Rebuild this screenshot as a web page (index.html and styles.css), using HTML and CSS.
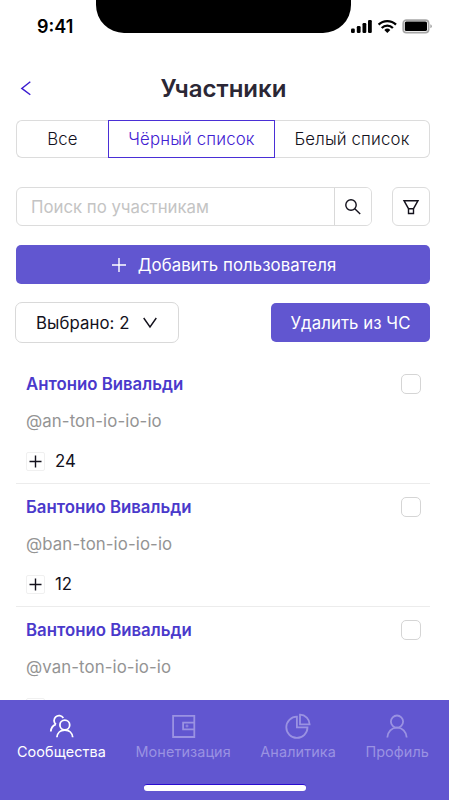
FILE: index.html
```html
<!DOCTYPE html>
<html lang="ru">
<head>
  <meta charset="UTF-8">
  <meta name="viewport" content="width=device-width, initial-scale=1">
  <title>Участники</title>
  <link rel="stylesheet" href="styles.css">
</head>
<body>
  <div class="screen">
    <!-- status bar -->
    <div class="status-bar">
      <span class="time">9:41</span>
      <div class="notch"></div>
      <svg class="status-icons" width="82" height="16" viewBox="0 0 82 16">
        <g fill="#000">
          <rect x="1" y="9.5" width="3.8" height="4.5" rx="1.2"/>
          <rect x="6.8" y="7" width="3.8" height="7" rx="1.2"/>
          <rect x="12.5" y="4" width="3.8" height="10" rx="1.2"/>
          <rect x="18" y="1" width="3.8" height="13" rx="1.2"/>
        </g>
        <g fill="none" stroke="#000" stroke-width="2.3">
          <path d="M28.6 5.6a12.4 12.4 0 0 1 17.4 0"/>
          <path d="M31.7 9a8 8 0 0 1 11.2 0"/>
        </g>
        <path d="M34.3 10.9a4.4 4.4 0 0 1 6 0l-3 3.1z" fill="#000"/>
        <rect x="53.2" y="1.2" width="25.4" height="12.4" rx="3.2" fill="#fff" stroke="#a6a6a6" stroke-width="1.7"/>
        <rect x="54.8" y="2.5" width="22.2" height="9.6" rx="1.6" fill="#000"/>
        <path d="M80.3 5.2q1.6.7 1.6 2t-1.6 2z" fill="#a6a6a6"/>
      </svg>
    </div>

    <header class="header">
      <svg class="back" width="12" height="16" viewBox="0 0 12 16"><path d="M10.3 1.8L1.8 8.4l8.5 6.4"/></svg>
      <h1>Участники</h1>
    </header>

    <main class="content">
      <div class="tabs">
        <button class="tab tab-all">Все</button>
        <button class="tab tab-black active">Чёрный список</button>
        <button class="tab tab-white">Белый список</button>
      </div>

      <div class="search-row">
        <div class="search">
          <span class="placeholder">Поиск по участникам</span>
          <button class="search-btn">
            <svg width="18" height="18" viewBox="0 0 18 18"><circle cx="7" cy="7" r="5.2"/><path d="M10.8 10.8l5.4 5.2"/></svg>
          </button>
        </div>
        <button class="filter-btn">
          <svg width="18" height="18" viewBox="0 0 18 18"><path d="M2 2.7h14l-4.5 8h-5zM6.5 10.7v4.8h5v-4.8"/></svg>
        </button>
      </div>

      <button class="btn add-btn">
        <svg width="14" height="14" viewBox="0 0 14 14"><path d="M7 0v14M0 7h14"/></svg>
        <span>Добавить пользователя</span>
      </button>

      <div class="actions">
        <button class="select-btn">
          <span>Выбрано: 2</span>
          <svg width="16" height="12" viewBox="0 0 16 12"><path d="M1.7 1L8 10l6.3-9"/></svg>
        </button>
        <button class="btn delete-btn">Удалить из ЧС</button>
      </div>

      <ul class="members">
        <li class="member">
          <div class="name">Антонио Вивальди</div>
          <div class="nick">@an-ton-io-io-io</div>
          <div class="count">
            <i class="plus"><svg width="13" height="13" viewBox="0 0 13 13"><path d="M6.5 .5v12M.5 6.5h12"/></svg></i>
            <span>24</span>
          </div>
          <span class="checkbox"></span>
        </li>
        <li class="member">
          <div class="name">Бантонио Вивальди</div>
          <div class="nick">@ban-ton-io-io-io</div>
          <div class="count">
            <i class="plus"><svg width="13" height="13" viewBox="0 0 13 13"><path d="M6.5 .5v12M.5 6.5h12"/></svg></i>
            <span>12</span>
          </div>
          <span class="checkbox"></span>
        </li>
        <li class="member">
          <div class="name">Вантонио Вивальди</div>
          <div class="nick">@van-ton-io-io-io</div>
          <div class="count">
            <i class="plus"></i>
          </div>
          <span class="checkbox"></span>
        </li>
      </ul>
    </main>

    <!-- bottom navigation -->
    <nav class="nav">
      <div class="nav-items">
        <a class="nav-item active">
          <svg width="26" height="26" viewBox="0 0 26 26">
            <path d="M2.8 18.5c.2-3.5 2-6 5-7.2M8 11.5A5 5 0 1 1 15.3 4.9"/>
            <circle cx="16.8" cy="12" r="4.9"/>
            <path d="M8.9 24.3c.3-4.3 3.5-7.3 7.9-7.3s7.6 3 7.9 7.3"/>
          </svg>
          <span>Сообщества</span>
        </a>
        <a class="nav-item">
          <svg width="26" height="26" viewBox="0 0 26 26">
            <path d="M3.1 2.8h21.2v21.2H3.1zM24.3 9.7H13.1v6.6h11.2"/>
            <circle cx="17" cy="13" r="1" stroke-width="1"/>
          </svg>
          <span>Монетизация</span>
        </a>
        <a class="nav-item">
          <svg width="26" height="26" viewBox="0 0 26 26">
            <path d="M11.9 3.7A10.6 10.6 0 1 0 22.5 14.3H11.9z"/>
            <path d="M15 1.7v9.6h9.6A9.6 9.6 0 0 0 15 1.7z"/>
          </svg>
          <span>Аналитика</span>
        </a>
        <a class="nav-item">
          <svg width="26" height="26" viewBox="0 0 26 26">
            <circle cx="13" cy="8.6" r="6.1"/>
            <path d="M3.3 24.5c.4-5.8 4.4-9.8 9.7-9.8s9.3 4 9.7 9.8"/>
          </svg>
          <span>Профиль</span>
        </a>
      </div>
      <div class="home-indicator"></div>
    </nav>
  </div>
</body>
</html>
```
FILE: styles.css
```css
* {
  box-sizing: border-box;
}
body {
  margin: 0;
  background: #fff;
  font-family: Inter, "Liberation Sans", sans-serif;
  font-size: 16.8px;
  color: #13111c;
}
button {
  font: inherit;
  color: inherit;
  padding: 0;
  letter-spacing: 0.06px;
  background: #fff;
  border: 1px solid #d9d9d9;
  white-space: nowrap;
}
svg {
  display: block;
  flex: none;
  fill: none;
  stroke: currentColor;
  stroke-width: 1.4;
}
.screen {
  width: 450px;
  height: 800px;
  overflow: hidden;
  display: flex;
  flex-direction: column;
}

/* status bar */
.status-bar {
  flex: none;
  height: 56px;
  display: flex;
  align-items: flex-start;
}
.time {
  width: 96px;
  padding: 16px 0 0 37px;
  font-size: 18px;
  font-weight: 600;
  line-height: 22px;
  color: #000;
}
.notch {
  width: 255px;
  height: 33px;
  background: #000;
  border-radius: 0 0 28px 28px;
}
.status-icons {
  margin: 19px 0 0 -1px;
  stroke: none;
}

.header {
  flex: none;
  height: 64px;
  padding: 0 20px;
  display: grid;
  grid-template-columns: 12px 1fr 12px;
  align-items: center;
}
.back {
  color: #3a1bd0;
}
h1 {
  margin: 0;
  padding-right: 3px;
  text-align: center;
  font-size: 24px;
  font-weight: 600;
  color: #2b2735;
}

.content {
  flex: none;
  height: 580px;
  padding: 0 20px 0 16px;
  overflow: hidden;
}
.tabs {
  display: flex;
  height: 38px;
}
.tab {
  border-color: #dcdcdc;
  font-weight: 350;
  letter-spacing: 0.15px;
}
.tab-all {
  width: 92px;
  border-right: 0;
  border-radius: 6px 0 0 6px;
}
.tab-black {
  width: 167px;
}
.tab-white {
  width: 155px;
  border-left: 0;
  border-radius: 0 6px 6px 0;
}
.tab.active {
  color: #3f21d2;
  border-color: #4a2fd6;
}

.search-row {
  display: flex;
  justify-content: space-between;
  margin-top: 29px;
}
.search {
  width: 356px;
  height: 39px;
  display: flex;
  align-items: center;
  justify-content: space-between;
  padding-left: 14px;
  border: 1px solid #dcdcdc;
  border-radius: 6px;
}
.placeholder {
  color: #c4c4c4;
}
.search-btn {
  width: 37px;
  height: 37px;
  display: grid;
  place-items: center;
  border-width: 0 0 0 1px;
  border-radius: 0 5px 5px 0;
}
.filter-btn {
  width: 38px;
  height: 39px;
  display: grid;
  place-items: center;
  border-color: #dcdcdc;
  border-radius: 6px;
}

.btn {
  background: #6156d0;
  color: #fff;
  border: 0;
  border-radius: 5px;
}
.add-btn {
  width: 414px;
  height: 39px;
  margin-top: 19px;
  padding-left: 2px;
  display: flex;
  align-items: center;
  justify-content: center;
  gap: 12px;
}
.actions {
  display: flex;
  align-items: center;
  justify-content: space-between;
  margin: 18px 0 0 -1px;
}
.select-btn {
  width: 164px;
  height: 41px;
  display: flex;
  align-items: center;
  gap: 12px;
  padding-left: 20px;
  border-color: #d9d9d9;
  border-radius: 7px;
}
.delete-btn {
  width: 159px;
  height: 39px;
}

/* members list */
.members {
  list-style: none;
  margin: 18px 0 0;
  padding: 0;
}
.member {
  height: 123px;
  padding: 12px 9px 0 10px;
  border-bottom: 1px solid #ececec;
  display: grid;
  grid-template-columns: 1fr 20px;
  grid-template-rows: 22px 22px 20px;
  row-gap: 14px;
  align-items: center;
}
.name {
  font-weight: 600;
  color: #4a39cb;
}
.nick {
  grid-row: 2;
  padding-top: 1px;
  letter-spacing: 0.1px;
  color: #949494;
}
.count {
  grid-row: 3;
  display: flex;
  align-items: center;
  gap: 10px;
  margin-top: 12px;
}
.plus {
  width: 19px;
  height: 19px;
  display: grid;
  place-items: center;
  border: 1px solid #f0f0f0;
  border-radius: 2px;
}
.checkbox {
  grid-row: 1;
  grid-column: 2;
  width: 20px;
  height: 20px;
  border: 1px solid #d5d5d5;
  border-radius: 5px;
}

/* bottom navigation */
.nav {
  flex: none;
  width: 449px;
  height: 100px;
  background: #6156d0;
}
.nav-items {
  height: 84px;
  padding: 13px 20px 0 17px;
  display: flex;
  justify-content: space-between;
}
.nav-item {
  display: flex;
  flex-direction: column;
  align-items: center;
  gap: 3px;
  font-size: 14.4px;
  letter-spacing: 0.1px;
  line-height: 20px;
  color: #9a92e2;
}
.nav-item svg {
  stroke-width: 1.8;
}
.nav-item.active {
  color: #fff;
}
.home-indicator {
  width: 162px;
  height: 7px;
  margin: 0 auto;
  background: #fff;
  border-top: 1px solid #2a0bd0;
  border-radius: 3px;
}
```
